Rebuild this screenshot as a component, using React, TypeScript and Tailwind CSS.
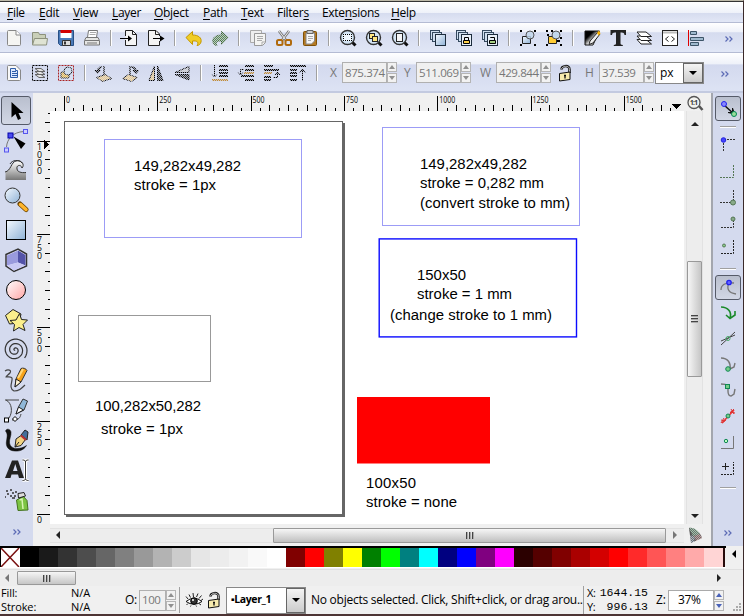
import React from "react";

const INK = "#222";

const Icon = ({ children, dim = false }: { children: React.ReactNode; dim?: boolean }) => (
  <svg viewBox="0 0 20 20" className="size-5 shrink-0" fill="none" stroke={INK}>
    {dim ? <g mask="url(#stipple)">{children}</g> : children}
  </svg>
);

const Tool = ({ children }: { children: React.ReactNode }) => (
  <svg viewBox="0 0 26 26" className="size-[26px] shrink-0" fill="none" stroke={INK}>
    {children}
  </svg>
);

// Shared gradients and the checker mask used for disabled icons
const Defs = () => (
  <svg className="absolute size-0">
    <defs>
      <pattern id="checker" width="2" height="2" patternUnits="userSpaceOnUse">
        <rect width="2" height="2" fill="#444" />
        <rect width="1" height="1" fill="#fff" />
        <rect x="1" y="1" width="1" height="1" fill="#fff" />
      </pattern>
      <mask id="stipple" maskUnits="userSpaceOnUse" x="0" y="0" width="30" height="30">
        <rect width="30" height="30" fill="url(#checker)" />
      </mask>
      <linearGradient id="blue" x1="0" y1="0" x2="1" y2="1">
        <stop offset="0" stopColor="#f4f9ff" />
        <stop offset="1" stopColor="#8fb2d6" />
      </linearGradient>
      <linearGradient id="pink" x1="0" y1="0" x2="1" y2="1">
        <stop offset="0" stopColor="#fff" />
        <stop offset="1" stopColor="#ffa5a5" />
      </linearGradient>
      <linearGradient id="wave" x1="0" y1="0" x2="0" y2="1">
        <stop offset="0" stopColor="#fff" />
        <stop offset="1" stopColor="#777" />
      </linearGradient>
      <linearGradient id="ink" x1="0" y1="0" x2="1" y2="1">
        <stop offset="0.3" stopColor="#000" />
        <stop offset="0.6" stopColor="#fff" />
      </linearGradient>
    </defs>
  </svg>
);

const PAGE = "M3.5 3.5a1 1 0 0 1 1-1H12L16.5 7v9.5a1 1 0 0 1-1 1h-11a1 1 0 0 1-1-1z";

const NewIcon = () => (
  <Icon>
    <path d={PAGE} fill="#f5f5f2" stroke="#888" />
    <path d="M12 2.5V7h4.5" fill="#fff" stroke="#888" />
  </Icon>
);
const OpenIcon = () => (
  <Icon>
    <path d="M2.5 16.5v-12h6l1 2h6v4" fill="#c9cfb8" stroke="#8c917d" />
    <path d="M4.500 10.500h13l-1 6.500h-14z" fill="#dfe3d3" stroke="#8c917d" />
  </Icon>
);
const SaveIcon = () => (
  <Icon>
    <path d="M2.5 2.5h15v15h-13l-2-2z" fill="#4a7ab8" stroke="#274f85" />
    <path d="M4.5 4h11v6h-11z" fill="#fff" stroke="none" />
    <path d="M4.5 2h11v3h-11z" fill="#d40000" stroke="none" />
    <path d="M6.5 12.5h8v5h-8z" fill="#ddd" stroke="#333" />
    <path d="M8 13.5h2v3h-2z" fill="#333" stroke="none" />
  </Icon>
);
const PrintIcon = () => (
  <Icon>
    <path d="M6.5 2.5h9l-1 7h-9z" fill="#fff" stroke="#777" />
    <path d="M8 4.5h6M7.5 6.5h6" stroke="#aaa" />
    <path d="M4 9.5h12l1.5 3v4.5h-15v-4.5z" fill="#e6e6e4" stroke="#777" />
    <path d="M3 12.5h14M5 15h10" stroke="#777" />
  </Icon>
);
const ImportIcon = () => (
  <Icon>
    <path d="M5.500 8V2.500h7l4 4v11h-11V12" fill="#f4f4f4" />
    <path d="M12.500 2.500v4h4" />
    <path d="M0 10.500h9" stroke="#000" />
    <path d="M8 7.500l4 3-4 3z" fill="#000" stroke="none" />
  </Icon>
);
const ExportIcon = () => (
  <Icon>
    <path d="M13.500 8V6l-3.500-3.500H2.500v15h11V13" fill="#f4f4f4" />
    <path d="M9.500 2.500v4h4" />
    <path d="M7 10.500h8" stroke="#000" />
    <path d="M14 7.500l4.500 3-4.500 3z" fill="#000" stroke="none" />
  </Icon>
);
const UndoIcon = () => (
  <Icon>
    <path d="M2 9.500l6.500-6v3.500c6 0 9.500 3 8.500 7-.5 2-2 3.500-4 3.500 2-3 .5-5-4.500-4.500v3.500z" fill="#f0cd25" stroke="#c49700" />
  </Icon>
);
const RedoIcon = () => (
  <Icon dim>
    <path d="M18 9.500l-6.500-6v3.500c-6 0-9.500 3-8.500 7 .5 2 2 3.500 4 3.500-2-3-.5-5 4.500-4.500v3.500z" fill="#5f8a55" stroke="#3d6233" />
  </Icon>
);
const CopyIcon = () => (
  <Icon>
    <path d="M2.500 2.500h11v12h-11z" fill="#eee" stroke="#aaa" />
    <path d="M6.500 5.500h11v9l-3 3h-8z" fill="#f4f4f2" stroke="#999" />
    <path d="M9 8.500h6M9 10.500h6M9 12.500h5M17 14h-3v3" stroke="#aaa" />
  </Icon>
);
const CutIcon = () => (
  <Icon>
    <path d="M5 3l7.500 10M15 3L7.500 13" stroke="#777" strokeWidth="2.600" />
    <path d="M5 3l7.500 10M15 3L7.500 13" stroke="#eee" />
    <rect x="3" y="12" width="5.500" height="5" rx="1.500" stroke="#b06a0c" strokeWidth="2" />
    <rect x="11.500" y="12" width="5.500" height="5" rx="1.500" stroke="#b06a0c" strokeWidth="2" />
  </Icon>
);
const PasteIcon = () => (
  <Icon>
    <rect x="3.500" y="3.500" width="13" height="14" rx="1" fill="#b57a22" stroke="#7f5006" />
    <path d="M6 5h8.500v8l-3 3H6z" fill="#f7f7f7" stroke="#888" />
    <path d="M7 2.500h6v3H7z" fill="#ccc" stroke="#666" />
    <path d="M8 8.500h5M8 10.500h5M8 12.500h3" stroke="#aaa" />
  </Icon>
);

const Lens = ({ children }: { children: React.ReactNode }) => (
  <Icon>
    <path d="M14 14l3.500 3.500" stroke="#111" strokeWidth="3" />
    <circle cx="9.500" cy="9.500" r="7" fill="#d3e4f4" stroke="#333" strokeWidth="1.400" />
    {children}
  </Icon>
);
const ZoomSelectionIcon = () => (
  <Lens>
    <rect x="5" y="6" width="9" height="7" fill="#eef5fc" stroke="none" />
    <path d="M5 6.500h9M5 12.500h9M5.500 6v7M13.500 6v7" stroke="#000" strokeDasharray="1 1" />
  </Lens>
);
const ZoomDrawingIcon = () => (
  <Lens>
    <rect x="5.500" y="5.500" width="5" height="5" fill="#ffe680" />
    <rect x="8.500" y="8.500" width="5" height="5" fill="#ffe680" />
  </Lens>
);
const ZoomPageIcon = () => (
  <Lens>
    <rect x="6.500" y="5.500" width="6" height="8" fill="#f6f6f6" />
  </Lens>
);

const Stack = ({ children }: { children?: React.ReactNode }) => (
  <Icon>
    <rect x="2.500" y="2.500" width="9" height="9" fill="#cfdff0" stroke="#34495e" />
    <rect x="4.500" y="4.500" width="9" height="9" fill="#cfdff0" stroke="#34495e" />
    <rect x="7.500" y="6.500" width="10" height="11" fill={children ? "#e8f0f8" : "url(#blue)"} stroke="#1c2c3c" />
    {children}
  </Icon>
);
const CloneIcon = () => (
  <Stack>
    <path d="M10.500 12v-2.500h4V12" stroke="#000" />
    <path d="M9.500 12.500h6v3h-6z" fill="#ffd24a" stroke="#000" />
  </Stack>
);
const UnlinkIcon = () => (
  <Stack>
    <path d="M10.500 10v-.5h4V12" stroke="#000" />
    <path d="M9.500 12.500h6v3h-6z" fill="#a5cf83" stroke="#000" />
  </Stack>
);

const Corners = () => <path d="M2 3h2M16 3h2M2 17h2M16 17h2" stroke="#000" strokeWidth="2" />;
const GroupIcon = () => (
  <Icon>
    <path d="M4.500 8.500h8v7h-8z" fill="url(#blue)" />
    <circle cx="12" cy="7" r="4" fill="#c3d8ec" fillOpacity="0.800" stroke="#555" />
    <Corners />
  </Icon>
);
const UngroupIcon = () => (
  <Icon>
    <path d="M4.500 8.500h8v7h-8z" fill="#fc3" />
    <circle cx="12" cy="7" r="4" fill="#c3d8ec" stroke="#555" />
    <Corners />
    <path d="M3 7h2M7 3h2M13 13h3M16 10h2" stroke="#000" strokeWidth="2" />
  </Icon>
);
const FillStrokeIcon = () => (
  <Icon>
    <path d="M3 3h14.500L11 17H3z" fill="url(#ink)" stroke="#111" />
    <path d="M8 13l8-9 2 2-7 9-4 1.500z" fill="#eee" />
    <path d="M15 5l2-2.500 1.500 3-2 2z" fill="#ffb400" stroke="none" />
  </Icon>
);
const TextIcon = () => (
  <Icon>
    <path d="M2.500 2h15.500v5h-1.500c-.3-2-1-2.600-3-2.600h-1V15c0 1.500.5 1.800 2.300 2v1H5.800v-1c1.800-.2 2.200-.5 2.200-2V4.400H7c-2 0-2.700.6-3 2.600H2.500z" fill="#222" stroke="none" />
  </Icon>
);
const LayersIcon = () => (
  <Icon>
    <path d="M3 11.500h9l5.500 4.500H7z" fill="#fff" />
    <path d="M3 8h9l5.500 4.500H7z" fill="#fff" />
    <path d="M3 4h9l5.500 4.500H7z" fill="#fff" />
  </Icon>
);
const XmlIcon = () => (
  <Icon>
    <rect x="2.500" y="2.500" width="15" height="15" fill="#fff" />
    <path d="M3 4.500h14" stroke="#bbb" strokeWidth="2" />
    <path d="M8.500 8.500L5.500 11l3 2.500M11.500 8.500l3 2.500-3 2.500" />
  </Icon>
);
const AlignIcon = () => (
  <Icon>
    <path d="M2.500 2v16" stroke="#e00000" />
    <path d="M4.500 3.500h6v3h-6zM4.500 9.500h13v3h-13zM4.500 14.500h8v3h-8z" fill="#9fb9ce" stroke="#3d5468" />
  </Icon>
);

const SelectAllIcon = () => (
  <Icon>
    <path d={PAGE} fill="#f8f8f8" stroke="#888" />
    <path d="M6.500 5.500h5v2h2v7h-7z" fill="#dce8ff" stroke="#2f5da8" />
    <path d="M8 8.500h4M8 10.500h5M8 12.500h5" stroke="#2f5da8" />
  </Icon>
);
const SelectLayersIcon = () => (
  <Icon>
    <path d="M5 11.500h6l4 3H9zM5 8.500h6l4 3H9zM5 5.500h6l4 3H9z" fill="#e4e4e4" stroke="#666" />
    <rect x="2.500" y="2.500" width="15" height="15" stroke="#000" strokeDasharray="2 1" />
  </Icon>
);
const DeselectIcon = () => (
  <Icon>
    <g mask="url(#stipple)">
      <path d="M5 9h8v6H5z" fill="#eb4" />
      <circle cx="12" cy="8" r="4" fill="#cde" />
    </g>
    <rect x="2.500" y="2.500" width="15" height="15" stroke="#a22" strokeDasharray="2 1" />
  </Icon>
);
const RotateLeftIcon = () => (
  <Icon dim>
    <path d="M10 3v9l7 4H10z" fill="#444" />
    <path d="M2.500 14.500l9-3 6 4-9 3z" fill="#ec8" />
    <path d="M3.500 9C3 5 6 3.500 8 4M1 7.500l2.500 3 3-3z" fill="#222" stroke="#000" />
  </Icon>
);
const RotateRightIcon = () => (
  <Icon dim>
    <path d="M10 3v9l-7 4h7z" fill="#444" />
    <path d="M17.500 14.500l-9-3-6 4 9 3z" fill="#ec8" />
    <path d="M11 4c3-.5 5 1 5 4M18.500 7.500l-2.500 3-3-3z" fill="#222" stroke="#000" />
  </Icon>
);
const FlipHIcon = () => (
  <Icon dim>
    <path d="M8.500 3v14.500H3z" fill="#ec8" stroke="#000" />
    <path d="M11.500 3v14.500H17z" fill="#333" stroke="#000" />
  </Icon>
);
const FlipVIcon = () => (
  <Icon dim>
    <path d="M17 3.500v6H3z" fill="#ccc" stroke="#000" />
    <path d="M17 17v-5.500H3z" fill="#333" stroke="#000" />
  </Icon>
);

const LowerBottomIcon = () => (
  <Icon dim>
    <path d="M9 3h9M9 7h9M9 10h9M9 13h9" stroke="#000" strokeWidth="2" />
    <path d="M2 17h16" stroke="#c08a35" strokeWidth="2" />
    <path d="M4.500 2v12M2 11l2.500 3L7 11" stroke="#000" />
  </Icon>
);
const LowerIcon = () => (
  <Icon dim>
    <path d="M9 3h9M9 7h9M5 13h13M9 17h9" stroke="#000" strokeWidth="2" />
    <path d="M8 10h10" stroke="#c08a35" strokeWidth="2" />
    <path d="M8 6.500H4.500V12M2 9l2.500 3L7 9" stroke="#000" />
  </Icon>
);
const RaiseIcon = () => (
  <Icon dim>
    <path d="M2 3h9M2 7h15M2 14h7M2 17h7" stroke="#000" strokeWidth="2" />
    <path d="M2 10h8" stroke="#c08a35" strokeWidth="2" />
    <path d="M11 14.500h4.500V9M13 12l2.500-3 2.500 3" stroke="#000" />
  </Icon>
);
const RaiseTopIcon = () => (
  <Icon dim>
    <path d="M2 3h16M2 7h7M2 10h7M2 13h7M2 17h7" stroke="#000" strokeWidth="2" />
    <path d="M14.500 18V7M12 9.500L14.500 6l2.500 3.500" stroke="#000" />
  </Icon>
);

const LockIcon = () => (
  <Icon>
    <path d="M6.500 6.500C6.500 2.500 14.500 1.500 14.500 6.500V10" stroke="#111" strokeWidth="2.500" />
    <path d="M6.500 6C7 3 14.500 1.500 14.500 6.500V10" stroke="#ddd" strokeWidth="0.800" />
    <path d="M4.500 10.500l10.500-1.500v7.500l-10.500 1.500z" fill="#f7ebae" stroke="#111" />
    <path d="M9 12.500h2M10 12.500v3" stroke="#111" strokeWidth="1.300" />
  </Icon>
);
const EyeIcon = () => (
  <Icon>
    <path d="M2 11.500Q10 5 18 11.500Q10 17 2 11.500z" fill="#fff" stroke="#111" />
    <circle cx="10" cy="11" r="3.300" fill="#333" stroke="#000" />
    <path d="M4 9L2 6.500M6.500 7.500L5 4.500M9.500 7l-.5-4M12.500 7l1.500-3.500M15 8.500l2.500-3M17 10.500l2-1.500M4 13.500l-1.500 1.500M15 13.500l2 1.500M12 15.500l.5 1M7 15.500l-.5 1" stroke="#222" />
    <circle cx="9" cy="10" r="1" fill="#fff" stroke="none" />
  </Icon>
);

// 2.8 clockwise turns, ending at the lower right
const spiral = Array.from({ length: 85 }, (_, i) => {
  const angle = ((40 - (84 - i) * 12) * Math.PI) / 180;
  const r = (i / 84) * 12.5;
  return `${(12 + r * Math.cos(angle)).toFixed(1)},${(13 + r * Math.sin(angle)).toFixed(1)}`;
}).join(" ");

const toolIcons = [
  <path key="select" d="M8.500 4v15.500l4-3.500 2.500 6 3-1.500-2.500-5.500h5z" fill="#000" stroke="none" />,
  <g key="node">
    <path d="M3.500 20C4 12 10 5 21 4.500" stroke="#777" />
    <path d="M10.500 9.500l12 7-4.500 5.500z" fill="#000" stroke="none" />
    <rect x="5" y="6" width="5" height="5" fill="#4a4af0" stroke="#00a" />
    <rect x="20.500" y="2.500" width="4" height="4" fill="#ccf" stroke="#55e" />
    <rect x="1.500" y="21" width="4" height="4" fill="#ccf" stroke="#55e" />
  </g>,
  <g key="tweak" stroke="#333">
    <path d="M2.500 23V15c5-1 5-10 12-11 5 0 7 4 5 7-1-3-5-3-5 1 0 3 2 4 8.500 4v7z" fill="url(#wave)" stroke="none" />
    <path d="M2 15c6-1 6-10 11-11 6-1.500 9 4 6 7-1-4-6-3-5 1 .5 3 4 4 9 3.500M7 7c2-4 9-5 12-1" />
  </g>,
  <g key="zoom">
    <path d="M17 17l6 5.500" stroke="#6b4400" strokeWidth="5" strokeLinecap="round" />
    <path d="M17.500 17.500l5.500 5" stroke="#ffb52b" strokeWidth="3.500" strokeLinecap="round" />
    <circle cx="9.500" cy="8.500" r="7.500" fill="url(#blue)" stroke="#333" />
  </g>,
  <rect key="rect" x="3.500" y="3.500" width="19" height="19" fill="url(#blue)" stroke="#000" />,
  <g key="box">
    <path d="M3 7.500L15 2l8.500 5v12L11 24.500l-8-5.500z" fill="#e8e8ff" stroke="#333" strokeWidth="1.500" />
    <path d="M4 8.500l11-5v12l-11 3z" fill="#9a9add" stroke="none" />
    <path d="M15 3.500l7.500 4.500v10.500L15 15.500z" fill="#5353a8" stroke="none" />
    <path d="M4 18.500l11-3 7.500 3-11.500 5z" fill="#c9c9f4" stroke="none" />
  </g>,
  <circle key="ellipse" cx="13" cy="13" r="9.500" fill="url(#pink)" stroke="#000" />,
  <g key="star" fill="#fbef8c" stroke="#222">
    <path d="M2.500 8.500L10 2.500l8 4.500-2 9-9.500 1z" />
    <path d="M16.500 6.500l2 6 6 .5-4.500 4.500 2 6-6-3-5.500 3.500 1-6.500-4.500-4 6-.5z" />
  </g>,
  <polyline key="spiral" points={spiral} stroke="#333" strokeWidth="1.200" />,
  <g key="pencil">
    <path d="M2 4c3-2 7-1 5 2-2 2-4 3-4 4 2 0 5-1 6 1 1 3-4 10 2 13 5 0 7-2 11-6" stroke="#444" strokeWidth="1.200" />
    <path d="M12 20l1-8L18 1.500c2-1 5 0 6 2L18 15z" fill="#f7a21a" stroke="#333" />
    <path d="M12 20l1-8 5 3z" fill="#fff3d0" />
    <path d="M15 11l5-9" stroke="#ffd97b" strokeWidth="2" />
  </g>,
  <g key="pen">
    <path d="M2 3h14M3 3c6 3 7 12 3 18M9 23c7 0 8-2 9-6" stroke="#444" />
    <path d="M13 17l3-8 4-7 4.500 2L21 13z" fill="#8fb7d8" stroke="#333" />
    <path d="M13 17l2.500-7 5 3z" fill="#fff" />
    <rect x="1.500" y="21" width="4" height="4" fill="#fff" stroke="#000" />
    <path d="M12 19.500l2.500 2.500-2.500 2.500L9.500 22z" fill="#fff" stroke="#000" />
  </g>,
  <g key="callig">
    <path d="M2.500 4c1-3 5-2 5.500 1C8.500 9 6 12 6.500 16c.5 3 3 5.500 7 5.500 4 0 7-1 10-3-3 5-8 6-12 5.500C5 23.500 2.500 19 3.500 14 4 10 5 7 2.500 4z" fill="#111" stroke="#111" strokeWidth="0.500" />
    <path d="M12 20l1-8 5-3.500 4.500 4L18 18.500z" fill="#f2d483" />
    <path d="M18 8l4-5 3 2-1 8z" fill="#456e9b" />
    <path d="M18 8.500l5 4.500" stroke="#b33" strokeWidth="2" />
    <path d="M12 20l4-5" />
  </g>,
  <g key="text">
    <path d="M2 21L9 3.500h6L21 21h-5l-1-3.500H8.500L7.500 21zM10 14h4.500L12.300 7z" fill="#222" stroke="none" />
    <path d="M19.500 3c2 0 3 .5 3 2 0-1.500 1-2 3-2M22.500 4v17M19.500 23.500c2 0 3-.5 3-2 0 1.500 1 2 3 2" stroke="#fff" strokeWidth="3" />
    <path d="M19.500 3c2 0 3 .5 3 2 0-1.500 1-2 3-2M22.500 4v17M19.500 23.500c2 0 3-.5 3-2 0 1.500 1 2 3 2" stroke="#333" />
  </g>,
  <g key="spray">
    <path d="M3 4h2M7 3h2M4 7h2M9 6h2M2 10h1M7 9h2M11 9h2M12 5h2M9 11h3" stroke="#333" strokeWidth="1.600" />
    <path d="M13.500 13l7-3.500 3.500 4 1 9.500-10 .5z" fill="#7cc443" stroke="#44731f" />
    <path d="M16.500 13l2.500-1 1 10" stroke="#d8f5b2" strokeWidth="1.500" />
    <path d="M15 6.500l6-1 1.500 3.500-7 2z" fill="#ddd" />
  </g>,
];

// Each icon is drawn around the middle of a 26px box
const snapIcons = {
  enable: (
    <g>
      <path d="M9 9l10 9" stroke="#111" strokeWidth="1.500" />
      <path d="M13 16.500h4.500v-4.500l2 6z" fill="#111" stroke="#111" />
      <circle cx="9" cy="8" r="2.500" fill="#88f" stroke="#22e" />
      <circle cx="19" cy="18" r="2.500" fill="#9d9" stroke="#085" />
    </g>
  ),
  bbox: (
    <g>
      <path d="M8.500 20V8.500H21" stroke="#333" strokeDasharray="2 1" />
      <circle cx="8.500" cy="9" r="2.300" fill="#44f" stroke="#22d" />
    </g>
  ),
  edge: <path d="M5 20.500h13.500V7" stroke="#575" strokeDasharray="2 1" />,
  corner: (
    <g>
      <path d="M5 19.500h13.500V7" stroke="#333" strokeDasharray="2 1" />
      <circle cx="18" cy="19.500" r="2.500" fill="#8a8" stroke="#575" />
    </g>
  ),
  mid: (
    <g>
      <path d="M6 19.500h12.500V8" stroke="#333" strokeDasharray="2 1" />
      <circle cx="18" cy="11" r="2" fill="#8a8" stroke="#575" />
    </g>
  ),
  center: (
    <g>
      <path d="M6 19.500h12.500V6" stroke="#222" strokeDasharray="2 1" />
      <circle cx="9" cy="11.500" r="1.500" fill="#8c8" stroke="#575" />
    </g>
  ),
  node: (
    <g stroke="#777" strokeWidth="1.300">
      <path d="M6 16c0-5 4-8 13-7M14 9c-3 6 0 10 7 11" />
      <circle cx="14" cy="8.500" r="2.200" fill="#66f" stroke="#22e" />
    </g>
  ),
  path: <path d="M6 7c7 0 11 5 9 11M11 15l4 3.500 5-3.500v-4" stroke="#1a8a2a" strokeWidth="1.600" />,
  cross: (
    <g>
      <path d="M6 19L20 6M6 15l14-6" stroke="#444" />
      <circle cx="13" cy="12.500" r="2" stroke="#4a6" />
    </g>
  ),
  cusp: (
    <g>
      <path d="M6 7c7 0 10 5 9 11l4-2 1-4" stroke="#777" strokeWidth="1.400" />
      <circle cx="13" cy="18" r="2.300" fill="#7c8" stroke="#185" />
    </g>
  ),
  smooth: (
    <g>
      <path d="M6 7c8 0 7 3 7 7 0 3 1 5 3 5l3-2 1-5" stroke="#777" strokeWidth="1.400" />
      <rect x="10.500" y="7.500" width="4" height="4" fill="#7c8" stroke="#185" />
    </g>
  ),
  line: (
    <g>
      <path d="M7 20L19 7" stroke="#e33" strokeWidth="1.500" />
      <path d="M6 17l4 1M7 20l4-3M15 9l5 1M16 6l3 5M6 20l3-5M15 10l4-4" stroke="#d33" />
      <circle cx="13" cy="13" r="2" fill="#7c8" stroke="#185" />
    </g>
  ),
  object: (
    <g>
      <path d="M6 19.500h12.500V7" stroke="#777" />
      <circle cx="11" cy="12" r="1.700" fill="#bfb" stroke="#185" />
    </g>
  ),
  rotation: (
    <g>
      <path d="M6 19.500h12.500V7" stroke="#222" strokeDasharray="2 1" />
      <path d="M7 11.500h7M10.500 8v7" stroke="#222" />
    </g>
  ),
};

const Sep = () => (
  <div className="flex w-3 shrink-0 justify-center">
    <div className="h-4 w-0.5 border-l border-[#a0a0a0] bg-white" />
  </div>
);

const Cell = ({ children }: { children: React.ReactNode }) => (
  <div className="flex w-[26px] shrink-0 items-center justify-center">{children}</div>
);

const More = () => (
  <svg viewBox="0 0 10 8" className="h-2 w-2.5 shrink-0" fill="none" stroke="#5c6bb5" strokeWidth="1.200">
    <path d="M1.500 1.500L4 4 1.500 6.500M5.500 1.500L8 4 5.500 6.500" />
  </svg>
);

const Arrow = ({ dir, color = "#222" }: { dir: "up" | "down" | "left" | "right"; color?: string }) => {
  const d = { up: "M0 6l4-4 4 4z", down: "M0 2h8L4 6z", left: "M6 0v8L2 4z", right: "M2 0v8l4-4z" }[dir];
  return (
    <svg viewBox="0 0 8 8" className="size-2 shrink-0">
      <path d={d} fill={color} />
    </svg>
  );
};

const Spinner = ({ blue = false }: { blue?: boolean }) => (
  <div className="flex w-[10px] shrink-0 flex-col gap-px">
    {(["up", "down"] as const).map((dir) => (
      <div key={dir} className="flex flex-1 items-center justify-center border border-[#b5b5b5] bg-[#f2f2f2]">
        <svg viewBox="0 0 6 4" className="h-1 w-1.5">
          <path d={dir === "up" ? "M0 4l3-4 3 4z" : "M0 0h6L3 4z"} fill={blue ? "#4a62b8" : "#909090"} />
        </svg>
      </div>
    ))}
  </div>
);

const Field = ({ value, className = "" }: { value: string; className?: string }) => (
  <div className={`flex h-[21px] shrink-0 ${className}`}>
    <div className="flex flex-1 items-center border border-[#b0b0b0] bg-[#f0f0f0] pl-[2px] text-[11.5px] tracking-[-0.4px] whitespace-nowrap text-[#777]">
      {value}
    </div>
    <Spinner />
  </div>
);

const menus = [
  { name: "File", key: 0, width: "w-[32px]" },
  { name: "Edit", key: 0, width: "w-[34px]" },
  { name: "View", key: 0, width: "w-[39px]" },
  { name: "Layer", key: 0, width: "w-[42px]" },
  { name: "Object", key: 0, width: "w-[49px]" },
  { name: "Path", key: 0, width: "w-[38px]" },
  { name: "Text", key: 0, width: "w-[36px]" },
  { name: "Filters", key: 6, width: "w-[45px]" },
  { name: "Extensions", key: 4, width: "w-[69px]" },
  { name: "Help", key: 0, width: "w-[38px]" },
];

const MenuBar = () => (
  <div className="flex h-[21px] items-center border-b border-[#b4bbd3] bg-[linear-gradient(to_bottom,#fff_0%,#eef1f9_55%,#d6dcef_56%,#e2e7f6_100%)] pt-[2px] pl-[7px] text-[12px] tracking-[-0.3px] text-black">
    {menus.map(({ name, key, width }) => (
      <span key={name} className={`${width} shrink-0 whitespace-nowrap`}>
        {name.slice(0, key)}
        <span className="underline underline-offset-2">{name[key]}</span>
        {name.slice(key + 1)}
      </span>
    ))}
  </div>
);

const commands: (React.FC | null)[] = [
  NewIcon, OpenIcon, SaveIcon, PrintIcon, null,
  ImportIcon, ExportIcon, null,
  UndoIcon, RedoIcon, null,
  CopyIcon, CutIcon, PasteIcon, null,
  ZoomSelectionIcon, ZoomDrawingIcon, ZoomPageIcon, null,
  Stack, CloneIcon, UnlinkIcon, null,
  GroupIcon, UngroupIcon, null,
  FillStrokeIcon, TextIcon, LayersIcon, XmlIcon, AlignIcon,
];

const CommandBar = () => (
  <div className="flex h-[30px] items-center border-b border-[#b4bbd3] bg-[linear-gradient(to_bottom,#fff_0%,#eef1f9_32%,#d5dbef_33%,#e1e7f6_100%)] pl-px">
    {commands.map((C, i) => (C ? <Cell key={i}><C /></Cell> : <Sep key={i} />))}
    <div className="ml-auto pt-[3px] pr-[9px]"><More /></div>
  </div>
);

const controls: (React.FC | null)[] = [
  SelectAllIcon, SelectLayersIcon, DeselectIcon, null,
  RotateLeftIcon, RotateRightIcon, FlipHIcon, FlipVIcon, null,
  LowerBottomIcon, LowerIcon, RaiseIcon, RaiseTopIcon, null,
];

const ControlBar = () => (
  <div className="flex h-10 items-center border-b-2 border-[#c3cae0] bg-[linear-gradient(to_bottom,#fff_0%,#eef1f9_29%,#d3d9ee_31%,#dde3f4_100%)] pt-px pl-px text-[12px] text-[#777]">
    {controls.map((C, i) => (C ? <Cell key={i}><C /></Cell> : <Sep key={i} />))}
    <span className="w-[19px] pl-[7px]">X</span>
    <Field value="875.374" className="w-[55px]" />
    <span className="w-[19px] pl-[7px]">Y</span>
    <Field value="511.069" className="w-[55px]" />
    <span className="w-[25px] pl-[9px]">W</span>
    <Field value="429.844" className="w-[55px]" />
    <div className="w-12 pl-[3px]"><div className="flex w-[22px] justify-center"><LockIcon /></div></div>
    <span className="-ml-[14px] w-[14px]">H</span>
    <Field value="37.539" className="w-[55px]" />
    <div className="ml-px flex h-[22px] w-[49px] border border-[#888] bg-white text-black">
      <span className="flex flex-1 items-center pl-1">px</span>
      <span className="flex w-5 items-center justify-center border border-[#666] bg-linear-to-b from-[#f4f4f4] to-[#ccc]">
        <Arrow dir="down" color="#000" />
      </span>
    </div>
    <div className="ml-auto pt-[2px] pr-[13px]"><More /></div>
  </div>
);

const Toolbox = () => (
  <div className="flex w-[33px] shrink-0 flex-col items-start bg-[#d4daee] pt-0.5 pl-px">
    {toolIcons.map((icon, i) => (
      <div
        key={i}
        className={
          i === 0
            ? "mt-px flex h-[29px] w-[30px] items-center justify-center rounded-[3px] border border-[#555a68] bg-linear-to-b from-[#b9bfce] to-[#d2d7e5]"
            : "flex h-[30px] w-[30px] items-center justify-center"
        }
      >
        <Tool>{icon}</Tool>
      </div>
    ))}
    <div className="mt-[13px] ml-[11px]"><More /></div>
  </div>
);

const STEP = 9.33;

const HRuler = () => (
  <svg viewBox="33 93 654 18" className="h-[18px] w-[654px]" shapeRendering="crispEdges">
    <rect x="33" y="93" width="654" height="18" fill="#f0f0f0" />
    {Array.from({ length: 67 }, (_, i) => i - 1).map((i) => {
      const x = Math.round(64 + i * STEP);
      const top = i % 10 === 0 ? 96 : i % 2 === 0 ? 105 : 108;
      return <rect key={i} x={x} y={top} width="1" height={111 - top} fill="#000" />;
    })}
    {[0, 250, 500, 750, 1000, 1250, 1500].map((n) => (
      <text key={n} x={66 + (n / 25) * STEP} y="102.500" fontSize="8.500" textLength={String(n).length * 4} lengthAdjust="spacingAndGlyphs">
        {n}
      </text>
    ))}
    <path d="M672 104h9l-4.500 5z" fill="#000" />
  </svg>
);

const VRuler = () => (
  <svg viewBox="33 111 17 413" className="h-[413px] w-[17px] shrink-0" shapeRendering="crispEdges">
    <rect x="33" y="111" width="17" height="413" fill="#f0f0f0" />
    {Array.from({ length: 44 }, (_, i) => i).map((i) => {
      const left = i % 10 === 0 ? 37 : i % 2 === 0 ? 45 : 48;
      return <rect key={i} x={left} y={Math.round(514 - i * STEP)} width={50 - left} height="1" fill="#000" />;
    })}
    {[1000, 750, 500, 250, 0].map((n) =>
      String(n).split("").map((digit, j) => (
        <text key={`${n}-${j}`} x="37" y={523 - (n / 25) * STEP + j * 8} fontSize="8.500" textLength="5" lengthAdjust="spacingAndGlyphs">
          {digit}
        </text>
      ))
    )}
    <path d="M44 140v9l5-4.500z" fill="#000" />
  </svg>
);

const labels = [
  { x: 134, y: 171, w: 107, text: "149,282x49,282" },
  { x: 134, y: 190, w: 82, text: "stroke = 1px" },
  { x: 95, y: 411, w: 106, text: "100,282x50,282" },
  { x: 101, y: 434, w: 82, text: "stroke = 1px" },
  { x: 420, y: 169, w: 107, text: "149,282x49,282" },
  { x: 420, y: 188, w: 124, text: "stroke = 0,282 mm" },
  { x: 420, y: 208, w: 150, text: "(convert stroke to mm)" },
  { x: 417, y: 280, w: 49, text: "150x50" },
  { x: 417, y: 299, w: 95, text: "stroke = 1 mm" },
  { x: 390, y: 320, w: 162, text: "(change stroke to 1 mm)" },
  { x: 366, y: 488, w: 50, text: "100x50" },
  { x: 366, y: 507, w: 91, text: "stroke = none" },
];

const Canvas = () => (
  <svg viewBox="50 111 634 413" className="h-[413px] w-[634px] shrink-0 bg-white">
    <path d="M343 123h2v394H66v-2h277z" fill="#666" />
    <rect x="64.500" y="121.500" width="278" height="393" fill="#fff" stroke="#666" />
    <rect x="104.500" y="139.500" width="197" height="98" fill="none" stroke="#9c9cf6" />
    <rect x="78.500" y="315.500" width="132" height="66" fill="none" stroke="#999" />
    <rect x="382.500" y="127.500" width="197" height="98" fill="none" stroke="#9c9cf6" />
    <rect x="379.200" y="238.900" width="197.300" height="98" fill="none" stroke="#0b0bff" strokeWidth="1.400" />
    <rect x="357" y="397" width="133" height="66.500" fill="#f00" />
    <g fontFamily="Liberation Sans, Arial, sans-serif" fontSize="14.900" fill="#000">
      {labels.map((l) => (
        <text key={`${l.x}-${l.y}`} x={l.x} y={l.y} textLength={l.w}>
          {l.text}
        </text>
      ))}
    </g>
  </svg>
);

const Grip = ({ vertical = false }: { vertical?: boolean }) => (
  <div className={`flex gap-px ${vertical ? "flex-col" : ""}`}>
    {[0, 1, 2].map((i) => (
      <div key={i} className={vertical ? "h-0.5 w-[7px] border-t border-[#444] bg-[#aaa]" : "h-[7px] w-0.5 border-l border-[#444] bg-[#aaa]"} />
    ))}
  </div>
);

const Workspace = () => (
  <div className="flex w-[678px] shrink-0 flex-col bg-[#f0f0f0]">
    <div className="flex h-[18px]">
      <HRuler />
      <svg viewBox="0 0 18 18" className="size-[18px]" fill="none" stroke="#555">
        <path d="M12 13l3.500 4" strokeWidth="2.500" />
        <circle cx="7" cy="9.500" r="6" fill="#f2f2ee" strokeWidth="1.300" />
        <text x="3" y="12" fontSize="6.500" fontWeight="bold" fill="#333" stroke="none" textLength="8">1:1</text>
      </svg>
    </div>
    <div className="flex h-[413px]">
      <VRuler />
      <Canvas />
      <div className="ml-[2px] flex w-[17px] flex-col items-center border-x border-[#e2e2e2] bg-[#ededed]">
        <div className="mt-[9px] h-2"><Arrow dir="up" /></div>
        <div className="mt-[133px] flex h-[116px] w-[15px] shrink-0 items-center justify-center rounded-[1px] border border-[#999] bg-linear-to-r from-[#f6f6f6] to-[#c6c6c6]">
          <Grip vertical />
        </div>
        <div className="mt-auto mb-[4px] h-2"><Arrow dir="down" /></div>
      </div>
    </div>
    <div className="flex flex-1 items-center pl-[17px]">
      <div className="flex h-[15px] w-[634px] items-center border-y border-[#e2e2e2] bg-[#ededed]">
        <div className="ml-1"><Arrow dir="left" /></div>
        <div className="ml-[211px] flex h-[15px] w-[393px] items-center justify-center rounded-[1px] border border-[#999] bg-linear-to-b from-[#f6f6f6] to-[#c0c0c0]">
          <Grip />
        </div>
        <div className="ml-[5px]"><Arrow dir="right" color="#777" /></div>
      </div>
      <svg viewBox="0 0 16 18" className="ml-1 h-[18px] w-4">
        <path d="M1 2C6 1 12 6 14 12L3 17z" fill="#555" />
        <g opacity="0.650" mask="url(#stipple)">
          <path d="M1 2C6 1 11 5 12 9L5 10z" fill="#cfd" />
          <path d="M12 8l2 4-6 3-2-5z" fill="#fcc" />
          <path d="M2 9l5 2-1 5-3 1z" fill="#def" />
        </g>
      </svg>
    </div>
  </div>
);

const SnapSep = () => (
  <div className="flex h-3 items-center">
    <div className="h-0.5 w-4 border-t border-[#a0a0a0] bg-white" />
  </div>
);

const SnapButton = ({ icon, active = false }: { icon: React.ReactNode; active?: boolean }) => (
  <div
    className={
      active
        ? "flex h-[25px] w-[26px] shrink-0 items-center justify-center rounded-[3px] border border-[#555a68] bg-linear-to-b from-[#b9bfce] to-[#d2d7e5]"
        : "flex h-[25.8px] w-[26px] shrink-0 items-center justify-center"
    }
  >
    <Tool>{icon}</Tool>
  </div>
);

const SnapBar = () => (
  <div className="flex w-8 shrink-0 flex-col items-center border-l-2 border-[#a3a6ae] bg-[#d4daee] pt-[3px]">
    <SnapButton icon={snapIcons.enable} active />
    <div className="-mb-0.5"><SnapSep /></div>
    <SnapButton icon={snapIcons.bbox} />
    <SnapButton icon={snapIcons.edge} />
    <SnapButton icon={snapIcons.corner} />
    <SnapButton icon={snapIcons.mid} />
    <SnapButton icon={snapIcons.center} />
    <div className="mt-[3px]"><SnapSep /></div>
    <SnapButton icon={snapIcons.node} active />
    <SnapButton icon={snapIcons.path} />
    <SnapButton icon={snapIcons.cross} />
    <SnapButton icon={snapIcons.cusp} />
    <SnapButton icon={snapIcons.smooth} />
    <SnapButton icon={snapIcons.line} />
    <SnapButton icon={snapIcons.object} />
    <SnapButton icon={snapIcons.rotation} />
    <div className="mt-px"><SnapSep /></div>
    <div className="mt-auto pb-[9px]"><More /></div>
  </div>
);

const swatches = [
  "#000000", "#1a1a1a", "#333333", "#4d4d4d", "#666666", "#808080", "#999999", "#b3b3b3", "#cccccc",
  "#e6e6e6", "#ececec", "#f2f2f2", "#f9f9f9", "#ffffff", "#800000", "#ff0000", "#808000", "#ffff00",
  "#008000", "#00ff00", "#008080", "#00ffff", "#000080", "#0000ff", "#800080", "#ff00ff", "#2b0000",
  "#550000", "#800000", "#aa0000", "#d40000", "#ff0000", "#ff2a2a", "#ff5555", "#ff8080", "#ffaaaa", "#ffd5d5",
];

const Palette = () => (
  <div className="flex h-[24px] shrink-0 border-b border-[#e0e0e0] bg-[#f0f0f0]">
    <div className="flex h-[22px] w-[726px] border-t-2 border-b border-t-black border-b-white">
      <svg viewBox="0 0 20 19" className="h-[19px] w-5 bg-white" stroke="#7a1010" strokeWidth="1.500">
        <path d="M1 0l18 19M19 0L1 19" />
        <path d="M.5 0v19" stroke="#000" strokeWidth="1" />
      </svg>
      {swatches.map((color, i) => (
        <div key={i} className="w-[19px] shrink-0" style={{ backgroundColor: color }} />
      ))}
      <div className="w-[2px] bg-[#280b0b]" />
    </div>
    <div className="flex-1 pt-[4px] pl-1"><Arrow dir="left" color="#000" /></div>
  </div>
);

const PaletteScroll = () => (
  <div className="flex h-4 shrink-0 items-center bg-[#ededed] pl-[3px]">
    <Arrow dir="left" color="#777" />
    <div className="ml-[6px] flex h-[14px] w-[59px] items-center justify-center rounded-[1px] border border-[#999] bg-linear-to-b from-[#f6f6f6] to-[#c6c6c6]">
      <Grip />
    </div>
    <div className="mr-[20px] ml-auto"><Arrow dir="right" /></div>
  </div>
);

const StatusBar = () => (
  <div className="flex h-[28px] shrink-0 items-center bg-[#f0f0f0] text-[12px] text-black">
    <div className="w-[70px] shrink-0 pl-px text-[11px] leading-[14px] tracking-[-0.1px]">
      <div>Fill:</div>
      <div>Stroke:</div>
    </div>
    <div className="w-[55px] shrink-0 pl-[1px] text-[11px] leading-[14px]">
      <div>N/A</div>
      <div>N/A</div>
    </div>
    <span className="w-[14px] shrink-0 tracking-[-0.3px]">O:</span>
    <Field value="100" className="w-[37px]" />
    <div className="ml-[3px] h-[26px] w-px shrink-0 bg-[#a0a0a0]" />
    <div className="ml-1 flex w-5 shrink-0 justify-center"><EyeIcon /></div>
    <div className="w-[22px] shrink-0"><LockIcon /></div>
    <div className="flex h-[27px] w-[80px] shrink-0 border border-[#888] bg-white">
      <span className="flex flex-1 items-center pl-1 text-[10.500px] font-bold tracking-[-0.4px] whitespace-nowrap">▪Layer_1</span>
      <span className="flex w-[19px] items-center justify-center border border-[#666] bg-linear-to-b from-[#f4f4f4] to-[#ccc]">
        <Arrow dir="down" color="#000" />
      </span>
    </div>
    <span className="w-[277px] shrink-0 pl-[5px] tracking-[-0.25px] whitespace-nowrap">No objects selected. Click, Shift+click, or drag arou..</span>
    <div className="h-[28px] w-px shrink-0 bg-[#a0a0a0]" />
    <div className="w-[13px] shrink-0 pl-[3px] text-[11px] leading-[14px] tracking-[-0.4px] whitespace-nowrap">
      <div>X:</div>
      <div>Y:</div>
    </div>
    <div className="w-[51px] shrink-0 text-right font-['Liberation_Mono',monospace] text-[11.500px] leading-[14px]">
      <div>1644.15</div>
      <div>996.13</div>
    </div>
    <span className="w-[20px] shrink-0 pl-[8px]">Z:</span>
    <div className="flex h-[21px] w-[56px] shrink-0">
      <div className="flex flex-1 items-center border border-[#aaa] bg-white pl-[9px] tracking-[-0.3px]">37%</div>
      <Spinner blue />
    </div>
    <svg viewBox="0 0 10 10" className="mt-[14px] ml-2 size-2.5" fill="#aaa">
      <path d="M7 1h2v2H7zM4 4h2v2H4zM7 4h2v2H7zM1 7h2v2H1zM4 7h2v2H4zM7 7h2v2H7z" />
    </svg>
  </div>
);

export default function App() {
  return (
    <div className="flex h-[616px] w-[744px] flex-col overflow-hidden border-t border-r border-t-[#bdb9a8] border-r-[#3b2a2a] bg-[#f0f0f0] font-['Open_Sans','Noto_Sans',sans-serif]">
      <Defs />
      <div className="h-px shrink-0 bg-[#333]" />
      <MenuBar />
      <CommandBar />
      <ControlBar />
      <div className="flex h-[453px] shrink-0">
        <Toolbox />
        <Workspace />
        <SnapBar />
      </div>
      <Palette />
      <PaletteScroll />
      <StatusBar />
      <div className="h-0.5 shrink-0 bg-[#4d3434]" />
    </div>
  );
}
